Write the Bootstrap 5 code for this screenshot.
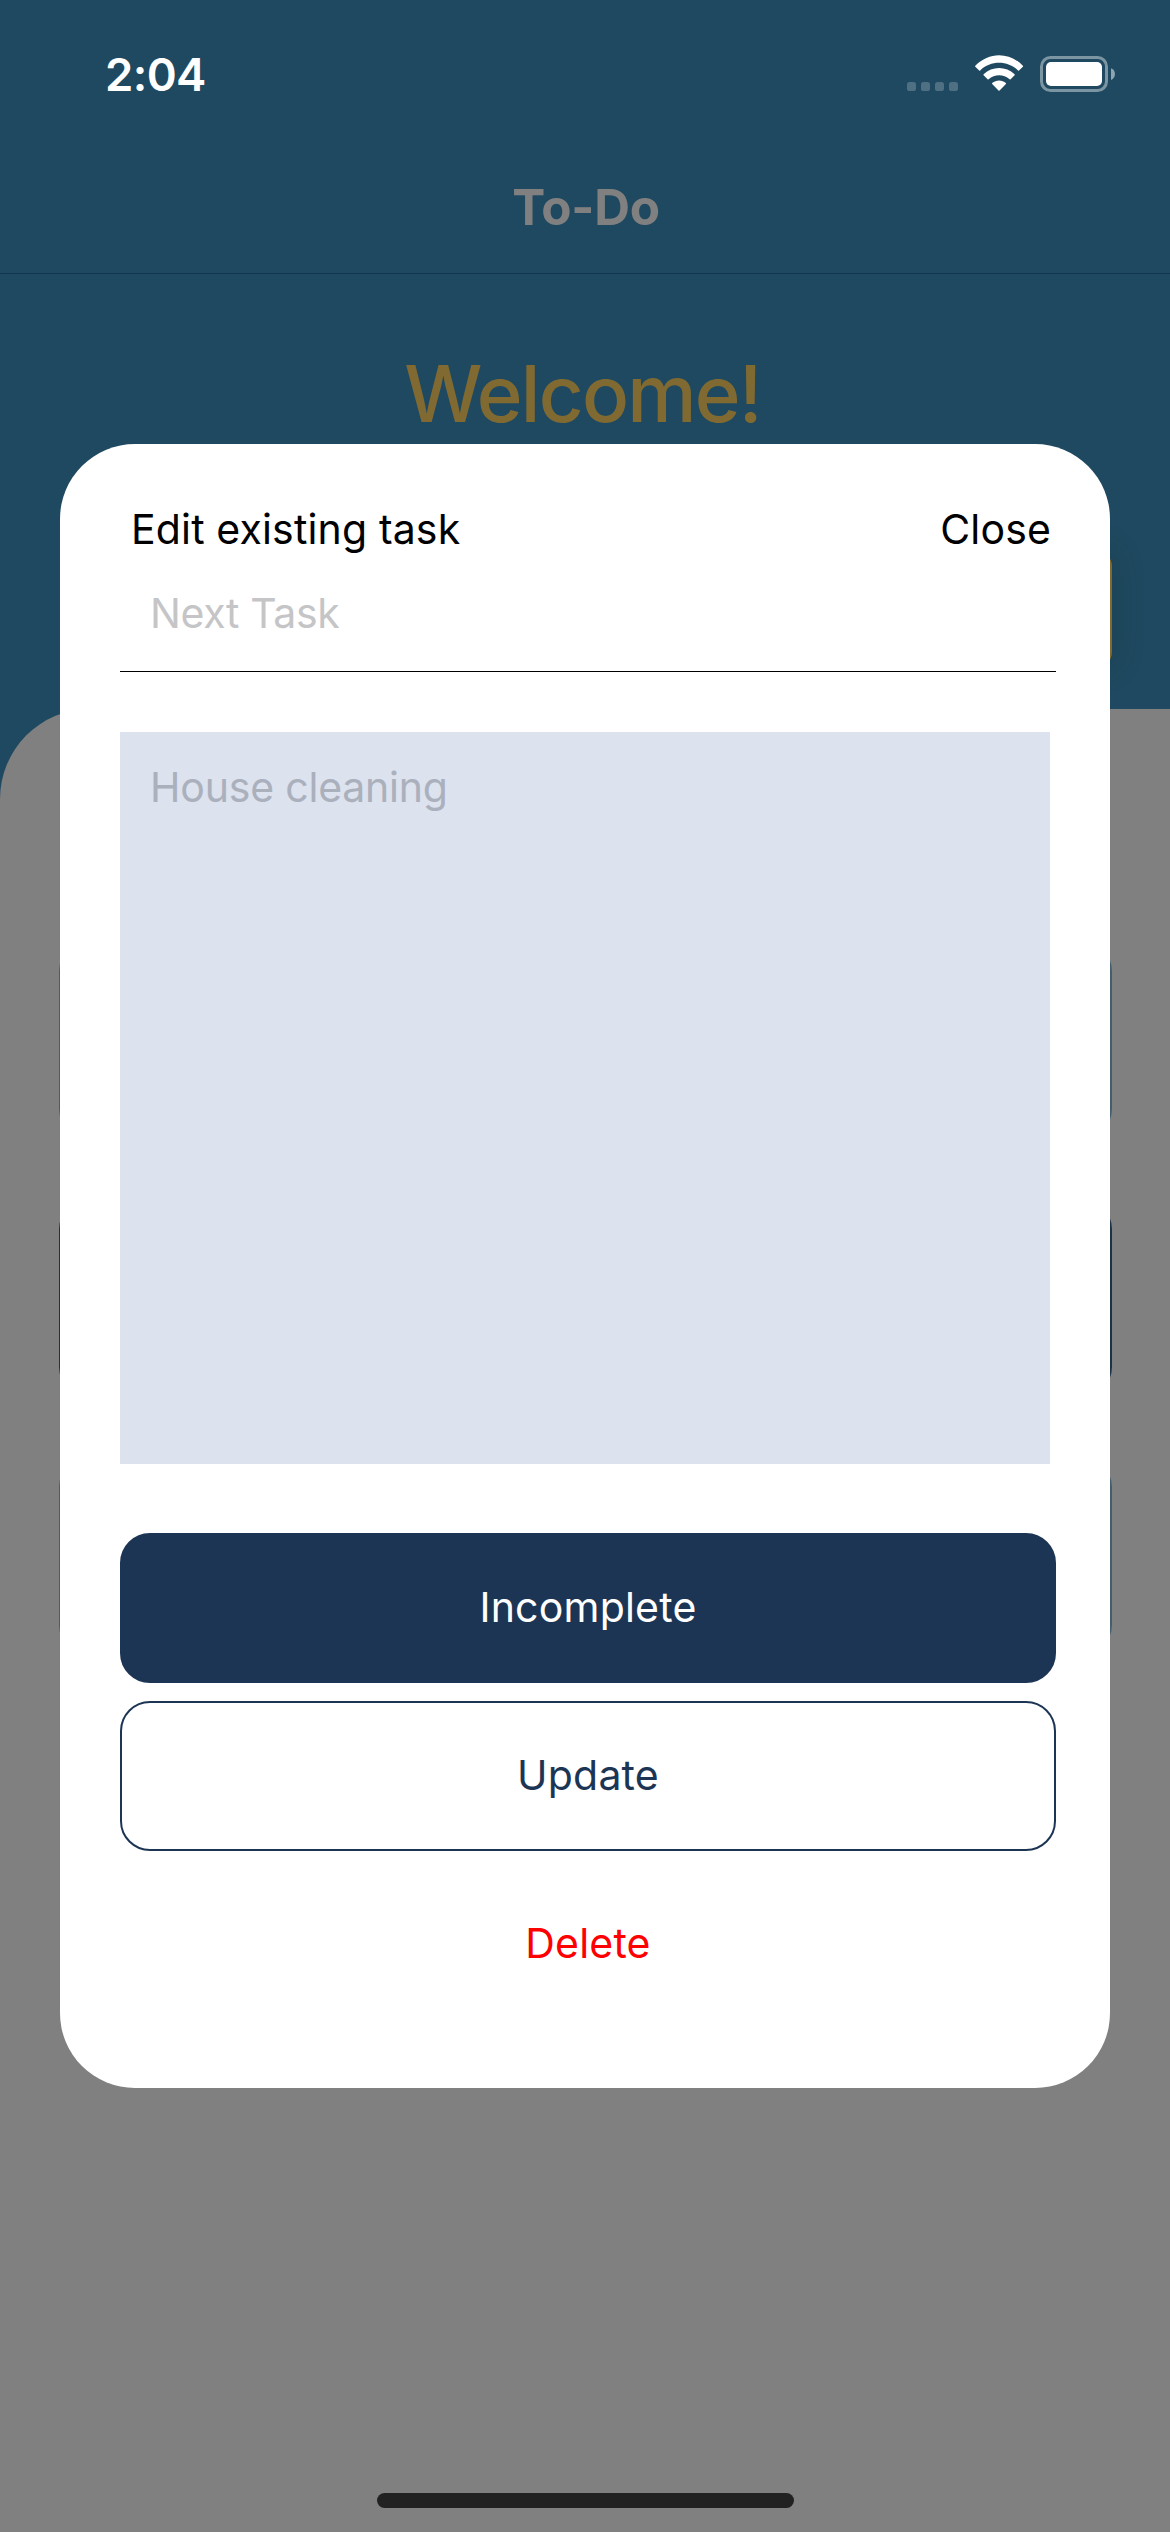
<!DOCTYPE html>
<html lang="en">
<head>
<meta charset="utf-8">
<meta name="viewport" content="width=device-width, initial-scale=1">
<title>To-Do</title>
<link href="https://cdn.jsdelivr.net/npm/bootstrap@5.3.0/dist/css/bootstrap.min.css" rel="stylesheet">
<style>
body{font-family:Inter,"Liberation Sans",sans-serif;background:#808080;color:#000}
.screen{width:1170px;height:2532px;background:#1f4960;overflow:hidden}
.status-bar{height:141px;padding:50px 54px 0 105px;color:#fff}
.clock{font-size:45.5px;font-weight:600;line-height:50px;letter-spacing:-.6px}
.app-header{height:133px;border-bottom:1px solid #10374d;color:#808080;font-size:49.5px;font-weight:700;line-height:132px;letter-spacing:-.25px;padding-left:2px}
.welcome{height:267px;padding:75px 5px 0 0;color:#806a31;font-size:78px;font-weight:500;line-height:90px;letter-spacing:-1.8px}
.new-task{width:150px;margin:10px 58px 0 auto;height:116px;border-radius:15px;background:#806a31;box-shadow:3px 0 28px rgba(20,50,50,.28)}
.top-area{height:435px}
.list-area{background:#808080;border-top-left-radius:90px;padding:232px 58.4px 0 58.5px;gap:60px}
.task-row{height:198px;border-radius:30px;background:#41606f}
.task-row.done{background:#1b3349}
.dialog-box{left:60px;top:444px;width:1050px;height:1644px;border-radius:75px;background:#fff;padding:60px 54px 69px 60px;font-size:41px}
.dialog-head{height:50px;line-height:50px;padding:0 5px 0 11px;letter-spacing:.15px}
.line-input,.line-input:focus{height:118px;border:0;border-bottom:1px solid #000;border-radius:0;padding:0 30px;font-size:41px;letter-spacing:-.35px;background:transparent}
.notes,.notes:focus{width:930px;height:732px;margin:60px 0 69px;border:0;border-radius:0;background:#dce2ee;padding:30px;font-size:41px;line-height:50px;letter-spacing:-.2px;resize:none}
.line-input::placeholder{color:#c5c5c7;opacity:1}
.notes::placeholder{color:#abb0bd;opacity:1}
.actions{gap:18px}
.action{height:150px;border-radius:30px;border:2px solid #1d3554;font-size:41px;padding:0 0 2px;line-height:50px;letter-spacing:.2px}
.action-fill{background:#1d3554;color:#fff}
.action-line{color:#1d3554}
.action-danger{border-color:transparent;color:#f00}
.home-bar{left:377px;top:2493px;width:417px;height:15px;border-radius:8px;background:#222}
</style>
</head>
<body>
<main class="screen position-relative d-flex flex-column">
  <div class="status-bar d-flex justify-content-between">
    <span class="clock">2:04</span>
    <svg width="210" height="42" viewBox="906 50 210 42" fill="#fff">
      <g fill="#4f6f83"><rect x="907" y="82" width="9" height="9" rx="2.6"/><rect x="921" y="82" width="9" height="9" rx="2.6"/><rect x="935" y="82" width="9" height="9" rx="2.6"/><rect x="949" y="82" width="9" height="9" rx="2.6"/></g>
      <path d="M975.3 65.7C988.800 51.600 1009.200 51.600 1022.900 65.700Q1023.300 66.200 1022.900 66.700L1019 70.500Q1018.500 70.900 1018 70.500C1007.500 60.300 990.500 60.300 980.200 70.500Q979.700 70.900 979.200 70.500L975.300 66.700Q974.900 66.200 975.300 65.700Z"/>
      <path d="M983.600 74.300C992.300 65.900 1005.900 65.900 1014.600 74.300Q1015 74.800 1014.600 75.300L1010.600 79.200Q1010.100 79.600 1009.600 79.200C1003.600 73.900 994.600 73.900 988.600 79.200Q988.100 79.600 987.600 79.200L983.600 75.300Q983.200 74.800 983.600 74.300Z"/>
      <path d="M992.200 83.100C996 79.700 1002.200 79.700 1005.900 83.100Q1006.300 83.600 1005.900 84.100L999.600 90.500Q999 91 998.500 90.500L992.200 84.100Q991.800 83.600 992.200 83.100Z"/>
      <rect x="1041.500" y="57.500" width="65" height="33" rx="9" fill="none" stroke="#7c95a3" stroke-width="3"/>
      <rect x="1046" y="62" width="56" height="24" rx="5"/>
      <path d="M1111 68.200C1116.300 70 1116.300 78 1111 80Z" fill="#8fa4b0"/>
    </svg>
  </div>
  <header class="app-header text-center">To-Do</header>
  <section class="top-area">
    <h1 class="welcome text-center m-0">Welcome!</h1>
    <div class="new-task"></div>
  </section>
  <section class="list-area flex-grow-1 d-flex flex-column">
    <div class="task-row"></div>
    <div class="task-row done"></div>
    <div class="task-row"></div>
  </section>
  <div class="dialog-box position-absolute" role="dialog">
    <div class="dialog-head d-flex justify-content-between"><span>Edit existing task</span><span>Close</span></div>
    <input class="line-input form-control" placeholder="Next Task">
    <textarea class="notes form-control" placeholder="House cleaning"></textarea>
    <div class="actions d-grid">
      <button class="btn action action-fill">Incomplete</button>
      <button class="btn action action-line">Update</button>
      <button class="btn action action-danger">Delete</button>
    </div>
  </div>
  <div class="home-bar position-absolute"></div>
</main>
<script src="https://cdn.jsdelivr.net/npm/bootstrap@5.3.0/dist/js/bootstrap.bundle.min.js"></script>
</body>
</html>
